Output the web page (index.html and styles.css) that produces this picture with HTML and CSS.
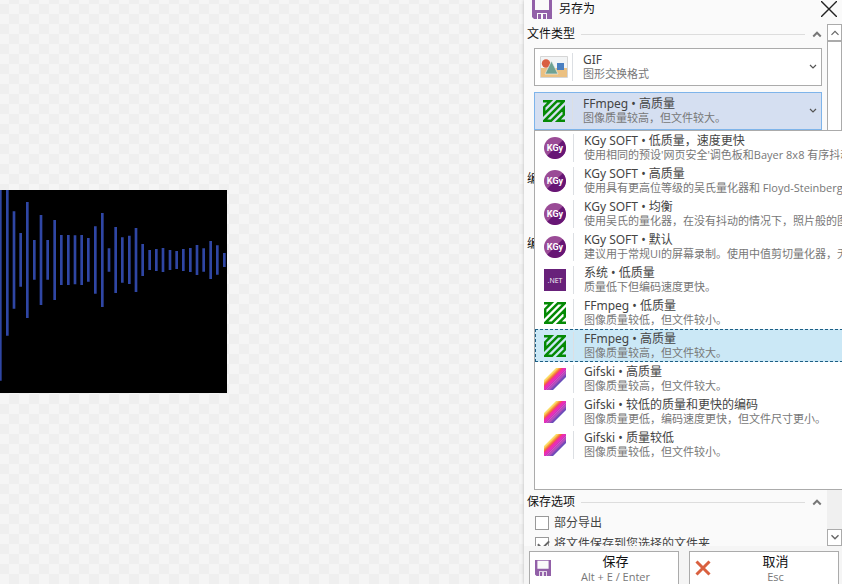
FILE: index.html
```html
<!DOCTYPE html>
<html lang="zh-CN">
<head>
<meta charset="utf-8">
<meta name="viewport" content="width=device-width, initial-scale=1">
<title>另存为</title>
<link rel="stylesheet" href="styles.css">
</head>
<body>
<svg class="defs" width="0" height="0" aria-hidden="true">
  <defs>
    <linearGradient id="stripe" gradientUnits="userSpaceOnUse" x1="6" y1="6" x2="16" y2="16">
      <stop offset="0" stop-color="#fbe27a"/><stop offset=".12" stop-color="#fbd050"/>
      <stop offset=".16" stop-color="#f7a04a"/><stop offset=".28" stop-color="#f2603f"/>
      <stop offset=".34" stop-color="#f0309a"/><stop offset=".5" stop-color="#ea2cc0"/>
      <stop offset=".55" stop-color="#c23db8"/><stop offset=".6" stop-color="#dc4cc4"/>
      <stop offset=".66" stop-color="#a84bb8"/><stop offset=".72" stop-color="#c050c0"/>
      <stop offset=".8" stop-color="#8b4bb8"/><stop offset="1" stop-color="#4a48b8"/>
    </linearGradient>
    <symbol id="ffmpeg" viewBox="0 0 22 22"><path d="M0 1.200H7.200L1.200 7.200V14L14 1.200H20.800L1.200 20.800H8L20.800 8V14.800L14.800 20.800H22" fill="none" stroke="#058a05" stroke-width="2.500"/></symbol>
    <symbol id="gifski" viewBox="0 0 22 22"><path d="M12 0H22V9L9 22H0V12Z" fill="url(#stripe)"/></symbol>
    <symbol id="kgy" viewBox="0 0 22 22"><circle cx="11" cy="11" r="11" fill="#9a4b96"/><path d="M18.8 3.2A11 11 0 0 1 3.2 18.8Z" fill="#671675"/><text x="11" y="14" text-anchor="middle" font-family="Roboto, sans-serif" font-size="9" font-weight="700" fill="#fff">KGy</text></symbol>
    <symbol id="net" viewBox="0 0 22 22"><path d="M0 0H22V22H0Z" fill="#68217a"/><text x="11" y="14" text-anchor="middle" font-family="Open Sans, sans-serif" font-size="7" fill="#fff">.NET</text></symbol>
    <symbol id="floppy" viewBox="0 0 20 20"><path d="M0 0H20V20H2L0 18Z" fill="#9260a8"/><path d="M3 1H17V11H3ZM5 14H15V20H5Z" fill="#fafafa"/><path d="M6 15H9V20H6ZM11 15H14V20H11Z" fill="#9260a8"/></symbol>
    <symbol id="up" viewBox="0 0 8 6"><path d="M1 5L4 2L7 5" fill="none" stroke="currentColor" stroke-width="1.600"/></symbol>
    <symbol id="up-thin" viewBox="0 0 8 6"><path d="M1 5L4 2L7 5" fill="none" stroke="currentColor"/></symbol>
    <symbol id="down" viewBox="0 0 8 6"><path d="M1 1L4 4L7 1" fill="none" stroke="currentColor" stroke-width="1.2"/></symbol>
  </defs>
</svg>
<div class="app">
  <main class="canvas">
    <svg class="wave" viewBox="0 30 681 609" role="img" aria-label="波形">
      <path d="M0 30H681V639H0Z" fill="#000"/>
      <path class="bars" d="M1 30V602M22 30V467M42 94V386M62 159V320M82 66V414M103 180V299M123 105V375M143 180V299M164 120V360M184 165V315M205 165V315M225 166V313M245 165V315M265 174V305M286 139V341M307 99V381M327 205V275M347 141V339M367 172V308M388 167V312M408 144V336M428 192V288M449 210V270M469 207V273M489 204V276M510 210V270M530 213V267M550 207V273M571 204V276M591 195V285M611 205V275M632 183V297M652 196V284M673 219V261"/>
    </svg>
  </main>
  <aside class="panel">
    <header class="head">
      <svg class="head-icon"><use href="#floppy"/></svg>
      <h1>另存为</h1>
      <button class="close" aria-label="关闭"><svg viewBox="0 0 16 16"><path d="M0 0L16 16M16 0L0 16" stroke="#222" stroke-width="1.4"/></svg></button>
    </header>
    <div class="scroll">
      <div class="content">
        <section class="group types">
          <h2><span>文件类型</span><svg class="chev"><use href="#up"/></svg></h2>
          <div class="fields">
            <button class="combo" aria-haspopup="listbox">
              <svg class="pic" viewBox="0 0 28 22"><path d="M.5 .5H27.5V21.5H.5Z" fill="#f2f4f5" stroke="#d5d5d5"/><path d="M1 12H27V21H1Z" fill="#ebc081"/><circle cx="6" cy="7.500" r="4.200" fill="#d95f43"/><path d="M17 7H24V14H17Z" fill="#4a7fc0"/><path d="M11.500 5L18 18H5Z" fill="#6fa292" stroke="#f2f4f5" stroke-width=".6"/></svg>
              <span class="text"><b>GIF</b><small>图形交换格式</small></span>
              <svg class="arrow"><use href="#down"/></svg>
            </button>
            <div class="picker">
              <button class="combo open" aria-haspopup="listbox" aria-expanded="true">
                <svg class="icon"><use href="#ffmpeg"/></svg>
                <span class="text"><b>FFmpeg • 高质量</b><small>图像质量较高，但文件较大。</small></span>
                <svg class="arrow"><use href="#down"/></svg>
              </button>
              <ul class="list" role="listbox" aria-label="编码器">
                <li role="option"><svg class="icon"><use href="#kgy"/></svg><span class="text"><b>KGy SOFT • 低质量，速度更快</b><small>使用相同的预设'网页安全'调色板和Bayer 8x8 有序抖动</small></span></li>
                <li role="option"><svg class="icon"><use href="#kgy"/></svg><span class="text"><b>KGy SOFT • 高质量</b><small>使用具有更高位等级的吴氏量化器和 Floyd-Steinberg</small></span></li>
                <li role="option"><svg class="icon"><use href="#kgy"/></svg><span class="text"><b>KGy SOFT • 均衡</b><small>使用吴氏的量化器，在没有抖动的情况下，照片般的图像</small></span></li>
                <li role="option"><svg class="icon"><use href="#kgy"/></svg><span class="text"><b>KGy SOFT • 默认</b><small>建议用于常规UI的屏幕录制。使用中值剪切量化器，无</small></span></li>
                <li role="option"><svg class="icon"><use href="#net"/></svg><span class="text"><b>系统 • 低质量</b><small>质量低下但编码速度更快。</small></span></li>
                <li role="option"><svg class="icon"><use href="#ffmpeg"/></svg><span class="text"><b>FFmpeg • 低质量</b><small>图像质量较低，但文件较小。</small></span></li>
                <li role="option" aria-selected="true" class="selected"><svg class="icon"><use href="#ffmpeg"/></svg><span class="text"><b>FFmpeg • 高质量</b><small>图像质量较高，但文件较大。</small></span></li>
                <li role="option"><svg class="icon"><use href="#gifski"/></svg><span class="text"><b>Gifski • 高质量</b><small>图像质量较高，但文件较大。</small></span></li>
                <li role="option"><svg class="icon"><use href="#gifski"/></svg><span class="text"><b>Gifski • 较低的质量和更快的编码</b><small>图像质量更低，编码速度更快，但文件尺寸更小。</small></span></li>
                <li role="option"><svg class="icon"><use href="#gifski"/></svg><span class="text"><b>Gifski • 质量较低</b><small>图像质量较低，但文件较小。</small></span></li>
              </ul>
            </div>
          </div>
        </section>
        <section class="group preset"><h2><span>编</span></h2></section>
        <section class="group encoder"><h2><span>编</span></h2></section>
        <section class="group">
          <h2><span>保存选项</span><svg class="chev"><use href="#up"/></svg></h2>
          <label class="check"><input type="checkbox"><span>部分导出</span></label>
          <label class="check"><input type="checkbox" checked><span>将文件保存到您选择的文件夹</span></label>
        </section>
      </div>
      <div class="bar">
        <button aria-label="向上滚动"><svg class="tri"><use href="#up-thin"/></svg></button>
        <div class="thumb"></div>
        <div class="track"></div>
        <button aria-label="向下滚动"><svg class="tri"><use href="#down"/></svg></button>
      </div>
    </div>
    <footer class="foot">
      <button class="action"><svg class="act-icon"><use href="#floppy"/></svg><span>保存<small>Alt + E / Enter</small></span></button>
      <button class="action"><svg class="act-icon" viewBox="0 0 16 16"><path d="M1.500 1.500L14.500 14.500M14.500 1.500L1.500 14.500" stroke="#d9603f" stroke-width="3"/></svg><span>取消<small>Esc</small></span></button>
    </footer>
  </aside>
</div>
</body>
</html>
```
FILE: styles.css
```css
* { box-sizing: border-box; }
body { margin: 0; font: 12px/14px "Open Sans", "Noto Sans CJK SC", sans-serif; color: #111; }
button { font: inherit; color: inherit; padding: 0; border: 0; background: none; }
svg { display: block; flex: none; }
.defs { position: absolute; }
.app { display: grid; grid-template-columns: 1fr 318px; height: 100vh; overflow: hidden; }
.canvas {
  display: flex; align-items: center; padding-bottom: 1px;
  background: repeating-conic-gradient(#efefef 0 25%, #f5f5f5 0 50%) 9px 4px / 20px 20px;
}
.wave { width: 227px; height: 203px; }
.bars { fill: none; stroke: #2f46a4; stroke-width: 8; }
.panel {
  display: flex; flex-direction: column; min-width: 0; height: 100vh; overflow: hidden;
  background: #fafafa; box-shadow: 0 0 3px #bbb;
}
.head { display: flex; align-items: center; height: 24px; padding: 0 5px 6px 8px; gap: 7px; }
.head-icon { width: 20px; height: 20px; }
h1 { flex: 1; margin: 0; font-size: 12px; font-weight: 400; line-height: 16px; }
.close { width: 16px; height: 16px; }
.close svg { width: 16px; height: 16px; }
.scroll { flex: 1; display: flex; min-height: 0; }
.content { flex: 1; min-width: 0; }
.group { padding: 0 5px 0 3px; }
.types { height: 145px; }
.preset { height: 65px; }
.encoder { height: 258px; }
h2 { display: flex; align-items: center; gap: 6px; height: 20px; margin: 0; font-size: 12px; font-weight: 400; line-height: 16px; }
h2::after { content: ""; order: 1; flex: 1; height: 1px; background: #ddd; }
.chev { order: 2; width: 10px; height: 8px; margin: 0 0 0 1px; color: #777; }
.fields { display: grid; gap: 6px; padding: 4px 0 0 7px; }
.picker { position: relative; }
.combo {
  display: flex; align-items: center; width: 100%; height: 38px; padding: 0 4px 0 8px;
  text-align: left; background: #fff; border: 1px solid #ababab;
}
.combo.open { background: #d5dff1; border-color: #7eb4ea; }
.pic { width: 28px; height: 22px; margin: 0 4px 0 -3px; }
.icon { width: 22px; height: 22px; margin-right: 7px; }
.text { flex: 1; padding-left: 10px; border-left: 1px solid #dcdfe3; white-space: nowrap; }
b, .text small { display: block; font-weight: 400; line-height: 14px; }
b { font-family: "Noto Sans", "Noto Sans CJK SC", sans-serif; font-size: 12px; color: #444; }
small { font-size: 11px; color: #777; }
.arrow { width: 8px; height: 6px; color: #555; }
.list {
  position: absolute; z-index: 2; top: 38px; left: 0; width: 400px; height: 360px;
  margin: 0; padding: 0; list-style: none; background: #fff; border: 1px solid #ababab;
}
.list li { display: flex; align-items: center; height: 33px; padding-left: 9px; }
.list .selected { background: #cbe8f6; outline: 1px dashed #1c5f85; outline-offset: -1px; }
.check { display: flex; align-items: center; gap: 5px; height: 21px; padding-left: 8px; color: #444; }
.check input { appearance: none; width: 14px; height: 14px; margin: 0; background: #fff; border: 1px solid #999; }
.check input:checked::before {
  content: ""; display: block; width: 9px; height: 5px; margin: 2px 0 0 2px;
  border: solid #666; border-width: 0 0 2px 2px; transform: rotate(-45deg);
}
.bar { display: flex; flex-direction: column; width: 15px; background: #f0f0f0; }
.bar button { display: grid; place-items: center; height: 17px; background: #fff; border: 1px solid #ababab; }
.tri { width: 10px; height: 7px; color: #666; }
.thumb { flex: 2; background: #fff; border: 1px solid #ababab; }
.track { flex: 1; }
.foot {
  position: relative; z-index: 3; display: grid; grid-template-columns: 1fr 1fr; gap: 10px;
  height: 38px; padding: 5px 3px 0 5px; background: #f5f5f5;
}
.action { display: flex; align-items: center; height: 38px; padding: 0 5px 4px; background: #fff; border: 1px solid #ababab; }
.action span { flex: 1; padding-left: 7px; font-size: 13px; line-height: 18px; }
.action small { display: block; line-height: 14px; }
.act-icon { width: 16px; height: 16px; }
```
